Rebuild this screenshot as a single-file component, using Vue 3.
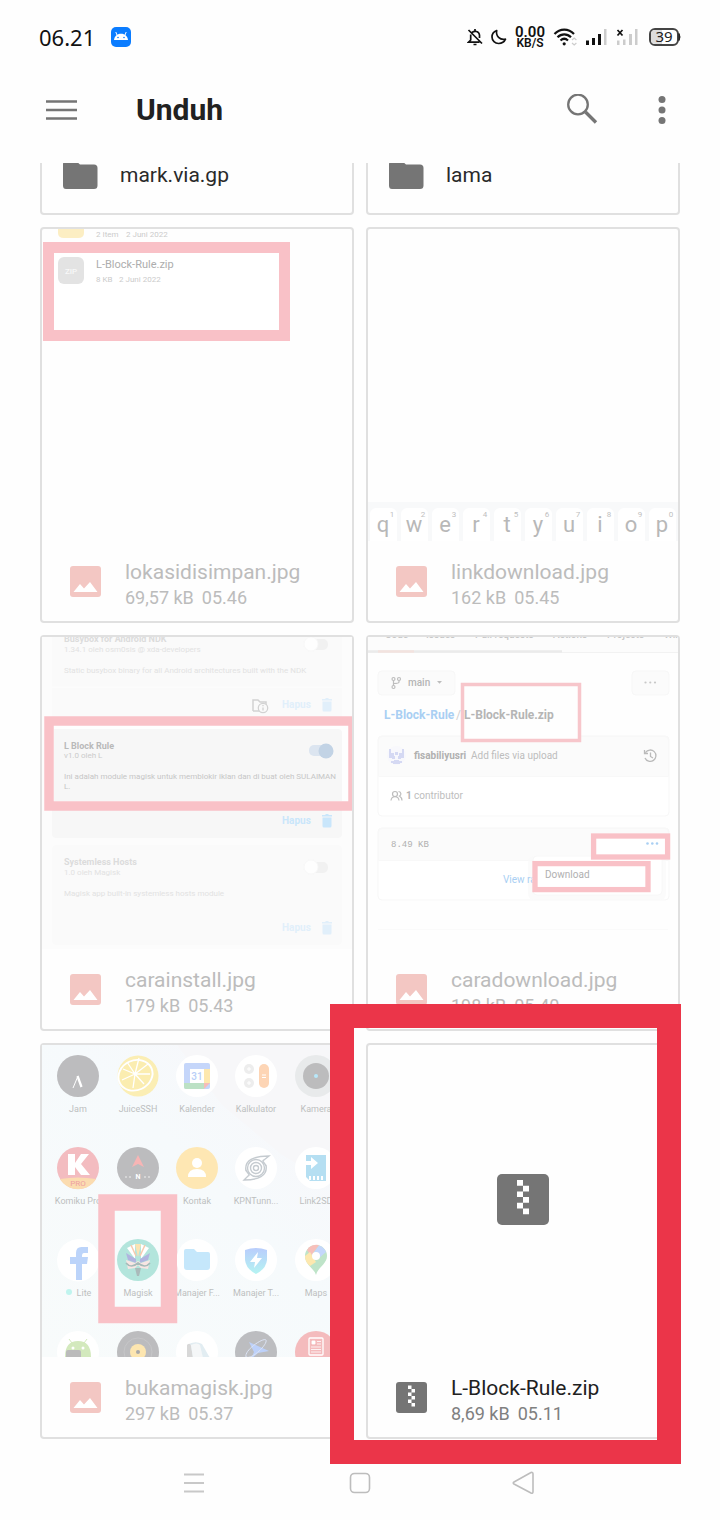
<script setup>
const folders = ['mark.via.gp', 'lama']

const files = [
  { id: 'saved', name: 'lokasidisimpan.jpg', size: '69,57 kB', time: '05.46' },
  { id: 'keyboard', name: 'linkdownload.jpg', size: '162 kB', time: '05.45' },
  { id: 'modules', name: 'carainstall.jpg', size: '179 kB', time: '05.43' },
  { id: 'repo', name: 'caradownload.jpg', size: '198 kB', time: '05.40' },
  { id: 'launcher', name: 'bukamagisk.jpg', size: '297 kB', time: '05.37' },
  { id: 'zip', name: 'L-Block-Rule.zip', size: '8,69 kB', time: '05.11', active: true },
]

const keys = [...'qwertyuiop'].map((letter, i) => ({
  letter,
  digit: (i + 1) % 10,
  x: 2 + i * 31,
}))

const columns = [36, 96, 155, 214, 274]
const labels = [
  ['Jam', 'JuiceSSH', 'Kalender', 'Kalkulator', 'Kamera'],
  ['Komiku Pro', '', 'Kontak', 'KPNTunn...', 'Link2SD'],
  ['', '', 'Manajer F...', 'Manajer T...', 'Maps'],
]
const modules = [
  { y: 75, opacity: 0.5 },
  { y: 191, opacity: 1 },
  { y: 298, opacity: 0.5 },
]
const tabs = [
  [17, 'Code'], [58, 'Issues'], [107, 'Pull requests'],
  [185, 'Actions'], [239, 'Projects'], [296, 'Wiki'],
]
</script>

<template>
  <div class="screen">
    <div class="status">
      <span class="clock">06.21</span>
      <svg class="notif" width="22" height="22" viewBox="0 0 22 22">
        <rect x="1" y="1" width="20" height="20" rx="5" fill="#0a7cff" />
        <path d="M4 14C4.300 10.500 7 7.800 11 7.800S17.700 10.500 18 14Z" fill="#fff" />
        <path d="M7 9 5.800 6M15 9 16.200 6" stroke="#fff" stroke-width="1" />
        <circle cx="8" cy="11.500" r=".8" fill="#0a7cff" /><circle cx="14" cy="11.500" r=".8" fill="#0a7cff" />
      </svg>
      <span class="spacer"></span>
      <svg width="16" height="18" viewBox="0 0 16 18" fill="none" stroke="#111" stroke-width="1.700">
        <path d="M5 4.500C7.500 2.500 12 3 12.500 7V10M3.700 6.500V12L1.500 14.200H12.500M1.500 2 15 15.500" />
        <path d="M8 1V3M6.500 16.500H9.500" />
      </svg>
      <svg width="16" height="16" viewBox="0 0 16 16" fill="none" stroke="#111" stroke-width="1.700">
        <path d="M5.700 1.500C3 2.500 1 5 1 8A6.500 6.500 0 0 0 7.700 14.500C11 14.500 13.500 12.500 14.500 10.200 9 11.500 4.500 7 5.700 1.500Z" stroke-linejoin="round" />
      </svg>
      <span class="speed"><b>0.00</b><small>KB/S</small></span>
      <svg width="24" height="20" viewBox="0 0 24 20" fill="none" stroke="#111" stroke-width="2.200">
        <path d="M1.500 7C7 1.200 15.500 1.200 21 7M4.500 10.300C8.500 6.300 14 6.300 18 10.300M7.500 13.500C10 11.200 12.500 11.200 15 13.500" />
        <circle cx="11.200" cy="16.800" r="1.600" fill="#111" stroke="none" />
        <path d="M19 13 21.200 11 23.400 13M19 16 21.200 18 23.400 16" stroke="#ccc" stroke-width="1.200" />
      </svg>
      <svg width="23" height="18" viewBox="0 0 23 18">
        <path d="M1 12.500h3V17H1ZM7 10h3v7H7ZM13 6h3v11h-3Z" fill="#111" />
        <path d="M19 1h2.500v16H19Z" fill="#ccc" />
      </svg>
      <svg width="25" height="18" viewBox="0 0 25 18">
        <path d="M1 12.500h2.500V17H1ZM7 11.500h2.500V17H7ZM13 6h3v11h-3ZM19 1h2.500v16H19Z" fill="#ccc" />
        <path d="M1.500 2 6.500 7.500M6.500 2 1.500 7.500" stroke="#111" stroke-width="1.700" />
      </svg>
      <svg width="32" height="20" viewBox="0 0 32 20">
        <rect x="1" y="2" width="28" height="16" rx="5" fill="#fff" stroke="#444" stroke-width="2" />
        <path d="M6 3H13V17H6A4 4 0 0 1 2 13V7A4 4 0 0 1 6 3Z" fill="#ddd" />
        <path d="M30 6.500Q32 10 30 13.500Z" fill="#222" stroke="#222" />
        <text x="15" y="15.300" text-anchor="middle" class="noto" font-size="15" fill="#222">39</text>
      </svg>
    </div>

    <header class="appbar">
      <button type="button" aria-label="Menu">
        <svg width="32" height="24" viewBox="0 0 32 24" stroke="#757575" stroke-width="2.500"><path d="M0 3.500H31M0 12H31M0 20.500H31" /></svg>
      </button>
      <h1>Unduh</h1>
      <span class="spacer"></span>
      <button type="button" aria-label="Search">
        <svg width="32" height="32" viewBox="0 0 32 32" fill="none" stroke="#757575">
          <circle cx="12" cy="10.500" r="9.800" stroke-width="2.300" />
          <path d="M19.500 18 30 28.500" stroke-width="3.300" />
        </svg>
      </button>
      <button type="button" class="more" aria-label="More options">
        <svg width="8" height="30" viewBox="0 0 8 30" fill="#757575"><circle cx="4" cy="4.500" r="3.500" /><circle cx="4" cy="15" r="3.500" /><circle cx="4" cy="25.500" r="3.500" /></svg>
      </button>
    </header>

    <main>
      <ul class="grid">
        <li v-for="folder in folders" :key="folder">
          <a class="card folder" href="#">
            <svg width="36" height="28" viewBox="0 0 36 28"><path d="M4 0H14L18 3.500H32Q35.500 3.500 35.500 7V24.500Q35.500 28 32 28H4Q1 28 1 24.500V3.500Q1 0 4 0Z" fill="#757575" /></svg>
            <span>{{ folder }}</span>
          </a>
        </li>

        <li v-for="file in files" :key="file.id">
          <a class="card" :class="{ active: file.active }" href="#">
            <svg v-if="file.id === 'saved'" class="thumb" viewBox="0 0 310 312">
              <path d="M16 0H42V4Q42 9 36 9H22Q16 9 16 4Z" fill="#fceec3" />
              <text x="54" y="8" font-size="8" fill="#cbcbcb">2 Item</text>
              <text x="84" y="8" font-size="8" fill="#cbcbcb">2 Juni 2022</text>
              <rect x="6.500" y="18.500" width="236" height="88" fill="#fff" stroke="#f9c1c7" stroke-width="11" />
              <rect x="16" y="28" width="26" height="27" rx="6" fill="#e3e3e3" />
              <text x="29" y="45" font-size="8" text-anchor="middle" font-weight="500" fill="#f8f8f8">ZIP</text>
              <text x="54" y="39" font-size="11" fill="#adadad">L-Block-Rule.zip</text>
              <text x="54" y="53" font-size="8" fill="#cbcbcb">8 KB</text>
              <text x="77" y="53" font-size="8" fill="#cbcbcb">2 Juni 2022</text>
            </svg>

            <svg v-else-if="file.id === 'keyboard'" class="thumb" viewBox="0 0 310 312">
              <rect y="273" width="310" height="39" fill="#f8f9fa" />
              <g v-for="key in keys" :key="key.letter">
                <rect :x="key.x" y="279" width="27" height="40" rx="6" fill="#fff" />
                <text :x="key.x + 13" y="303" font-size="22" text-anchor="middle" fill="#b8b8b8">{{ key.letter }}</text>
                <text :x="key.x + 22" y="288" font-size="8" text-anchor="middle" fill="#c0c0c0">{{ key.digit }}</text>
              </g>
            </svg>

            <svg v-else-if="file.id === 'modules'" class="thumb" viewBox="0 0 310 312">
              <rect width="310" height="312" fill="#fcfcfc" />
              <rect x="10" y="-8" width="290" height="90" fill="#fafafa" />
              <path d="M10 50H300" stroke="#fdfdfd" />
              <rect x="10" y="165" width="290" height="36" rx="4" fill="#f7f7f7" />
              <rect x="10" y="208" width="290" height="100" rx="4" fill="#fafafa" />
              <rect x="7" y="84" width="304" height="85" fill="#fefefe" stroke="#f9c1c7" stroke-width="9.500" />
              <path d="M12 92H296Q300 92 300 96V164H12Z" fill="#f7f7f7" />
              <g font-size="9" font-weight="700">
                <text x="22" y="5" fill="#dcdcdc">Busybox for Android NDK</text>
                <text x="22" y="112" fill="#b9b9b9">L Block Rule</text>
                <text x="22" y="228" fill="#dcdcdc">Systemless Hosts</text>
              </g>
              <g font-size="8" fill="#e2e2e2">
                <text x="22" y="15">1.34.1 oleh osm0sis @ xda-developers</text>
                <text x="22" y="121" fill="#cbcbcb">v1.0 oleh L</text>
                <text x="22" y="238">1.0 oleh Magisk</text>
                <text x="22" y="36">Static busybox binary for all Android architectures built with the NDK</text>
                <text x="22" y="142" fill="#c6c6c6">Ini adalah module magisk untuk memblokir iklan dan di buat oleh SULAIMAN</text>
                <text x="22" y="152" fill="#c6c6c6">L.</text>
                <text x="22" y="259">Magisk app built-in systemless hosts module</text>
              </g>
              <g v-for="y in [7, 230]" :key="y">
                <rect x="266" :y="y - 5" width="20" height="11" rx="5" fill="#f1f1f1" />
                <circle cx="269" :cy="y" r="7" fill="#fefefe" stroke="#f8f8f8" />
              </g>
              <rect x="267" y="108" width="21" height="11" rx="5" fill="#dce5f0" />
              <circle cx="284" cy="114" r="7.500" fill="#c2d3e5" />
              <path d="M211 74V63H216L218 65H224V68M211 74H218" fill="none" stroke="#d2d2d2" stroke-width="1.500" />
              <circle cx="221" cy="71" r="4.700" fill="#fafafa" stroke="#d2d2d2" stroke-width="1.300" />
              <path d="M221 70.500V73.500M221 68V69.200" stroke="#d2d2d2" stroke-width="1.300" />
              <g v-for="m in modules" :key="m.y" :opacity="m.opacity" fill="#c9e6fb">
                <text x="240" :y="m.y - 4" font-size="10" font-weight="700">Hapus</text>
                <path :transform="`translate(280 ${m.y - 14})`" d="M0 1H3L4 0H6L7 1H10V2.500H0ZM.5 3.500H9.500V12Q9.500 13.500 8 13.500H2Q.5 13.500 .5 12Z" />
              </g>
            </svg>

            <svg v-else-if="file.id === 'repo'" class="thumb" viewBox="0 0 310 312">
              <rect width="310" height="15" fill="#fcfcfc" />
              <text v-for="[x, tab] in tabs" :key="tab" :x="x" y="1" font-size="10" font-weight="500" fill="#c8c8c8">{{ tab }}</text>
              <path d="M0 15.500H310" stroke="#f2f2f2" />
              <path d="M0 14.500H194" stroke="#ebebeb" stroke-width="2.500" />
              <path d="M10 14.500H46" stroke="#f3e3df" stroke-width="2.500" />
              <g fill="#fbfbfb" stroke="#f7f7f7">
                <rect x="10" y="34" width="77" height="24" rx="4" />
                <rect x="264" y="34" width="37" height="24" rx="4" />
              </g>
              <g fill="none" stroke="#bdbdbd" stroke-width="1.200">
                <circle cx="25.500" cy="42" r="1.500" /><circle cx="31" cy="42" r="1.500" /><circle cx="25.500" cy="50" r="1.500" />
                <path d="M25.500 43.500V48.500M31 43.500V45Q31 46.500 25.500 46.500" />
              </g>
              <text x="40" y="49" font-size="10" font-weight="500" fill="#b5b5b5">main</text>
              <path d="M69 44H74L71.500 46.700Z" fill="#bdbdbd" />
              <g fill="#c8c8c8"><circle cx="277.500" cy="45.500" r="1.100" /><circle cx="282.300" cy="45.500" r="1.100" /><circle cx="287" cy="45.500" r="1.100" /></g>
              <g fill="#fff" stroke="#f7f7f7">
                <rect x="10" y="99" width="291" height="80" rx="4" />
                <rect x="10" y="191" width="291" height="72" rx="4" />
              </g>
              <path d="M10.500 139.500V103Q10.500 99.500 14 99.500H297Q300.500 99.500 300.500 103V139.500ZM10.500 223.500V195Q10.500 191.500 14 191.500H297Q300.500 191.500 300.500 195V223.500Z" fill="#fbfbfb" stroke="#f8f8f8" />
              <rect x="94.500" y="47.500" width="117" height="56" fill="#fefefe" stroke="#f7c6cb" stroke-width="3.500" />
              <g font-size="12" font-weight="700">
                <text x="16" y="82" fill="#a9cff3">L-Block-Rule</text>
                <text x="96" y="82" fill="#b5b5b5">L-Block-Rule.zip</text>
              </g>
              <text x="88" y="82" font-size="12" fill="#d0d0d0">/</text>
              <circle cx="28.500" cy="118.500" r="9.500" fill="#f8f8fc" />
              <path d="M21 112h2v4h3v3h-2v2h-3ZM36 112h-2v4h-3v3h2v2h3ZM27 115h3v3h-3ZM24 119h3v3h-3ZM30 119h3v3h-3ZM23 124h3v-1h5v1h3v2h-2v1h-7v-1h-2Z" fill="#d5d9f3" />
              <text x="46" y="122" font-size="10" font-weight="700" fill="#b0b0b0">fisabiliyusri</text>
              <text x="103" y="122" font-size="10" fill="#bdbdbd">Add files via upload</text>
              <path d="M277.500 115.500A5.700 5.700 0 1 1 277 121M276.500 113V116.500H280M282.500 115.500V119.500L285 121" fill="none" stroke="#bababa" stroke-width="1.300" />
              <g fill="none" stroke="#bdbdbd" stroke-width="1.200">
                <circle cx="27" cy="157" r="2.500" /><path d="M23 163.500C23.500 158.500 30.500 158.500 31 163.500M30.500 154.500C33.500 155 33.500 158 31.500 159 33 160 34 161.500 34 163.500" />
              </g>
              <text x="38" y="162" font-size="10" font-weight="700" fill="#b5b5b5">1</text>
              <text x="46" y="162" font-size="10" fill="#bdbdbd">contributor</text>
              <text x="23" y="210" font-size="9" class="mono" fill="#b0b0b0">8.49 KB</text>
              <rect x="160" y="219" width="138" height="44" rx="6" fill="#fafafa" opacity=".7" />
              <text x="135" y="246" font-size="10" fill="#a9cff3">View raw</text>
              <rect x="165" y="219" width="129" height="39" rx="4" fill="#fff" stroke="#f8f8f8" />
              <g fill="#fff" stroke="#f9c1c7" stroke-width="5.300">
                <rect x="225.600" y="199" width="74" height="21" />
                <rect x="167" y="226.600" width="113" height="26" />
              </g>
              <g fill="#a9cff3"><circle cx="279.500" cy="206.500" r="1.300" /><circle cx="284.300" cy="206.500" r="1.300" /><circle cx="289" cy="206.500" r="1.300" /></g>
              <text x="177" y="241" font-size="10" fill="#b0b0b0">Download</text>
              <path d="M10 292.500H300" stroke="#fafafa" />
            </svg>

            <svg v-else-if="file.id === 'launcher'" class="thumb" viewBox="0 0 310 312">
              <defs>
                <linearGradient id="wall" x1="0" y1="1" x2="1" y2="0">
                  <stop offset="0" stop-color="#f8fbfb" /><stop offset=".55" stop-color="#f6fafc" /><stop offset="1" stop-color="#f8f6fa" />
                </linearGradient>
                <linearGradient id="shield" x1="0" y1="0" x2="0" y2="1">
                  <stop offset="0" stop-color="#b9cdfc" /><stop offset="1" stop-color="#b5f4f2" />
                </linearGradient>
              </defs>
              <rect width="310" height="312" fill="url(#wall)" />
              <path d="M135 0H310V150L240 110 180 60Z" fill="#f7f7f9" />
              <g font-size="9" text-anchor="middle" fill="#bdbfc0">
                <template v-for="(row, r) in labels" :key="r">
                  <text v-for="(label, c) in row" :key="c" :x="columns[c]" :y="67 + r * 92">{{ label }}</text>
                </template>
                <text x="42" y="251">Lite</text>
              </g>
              <circle cx="27" cy="247" r="3" fill="#c0f4ee" />
              <rect x="64.500" y="157.500" width="62.500" height="112.500" fill="#f8fcfd" stroke="#f9c1c7" stroke-width="16.500" />
              <text x="96" y="251" font-size="9" text-anchor="middle" fill="#bdbfc0">Magisk</text>

              <g transform="translate(36 31)">
                <circle r="21" fill="#bcbcbe" />
                <path d="M-5 12 0 0" stroke="#fff" stroke-width="1" /><path d="M-.5 0 3.500 11" stroke="#fff" stroke-width="2.300" />
              </g>
              <g transform="translate(96 31)">
                <circle r="20.500" fill="#fbeeb4" />
                <circle cx="-2" cy="-2" r="17.500" fill="#fbedb0" stroke="#fff" stroke-width="2" transform="rotate(-25) scale(1 .85)" />
                <path d="M-3-2-15-7M-3-2-11-14M-3-2 1-18M-3-2 10-12M-3-2 12-2M-3-2 6 8M-3-2-5 12M-3-2-16 4" stroke="#fff" stroke-width="1.300" />
              </g>
              <g transform="translate(155 31)">
                <circle r="21" fill="#fff" />
                <rect x="-13" y="-13" width="26" height="26" rx="2" fill="#c5d6fa" />
                <path d="M7-7H13V7H7Z" fill="#fde8ae" /><path d="M-13 7H7V13H-11Q-13 13-13 11Z" fill="#bce1c5" /><path d="M7 7H13L7 13Z" fill="#f6bcb8" />
                <rect x="-7" y="-7" width="14" height="14" fill="#fff" />
                <text y="4" text-anchor="middle" font-size="10" font-weight="500" fill="#b9cff8">31</text>
              </g>
              <g transform="translate(214 31)">
                <circle r="21" fill="#fff" />
                <circle cx="-7" cy="-7" r="5" fill="#ededed" /><circle cx="-7" cy="7" r="5" fill="#ededed" />
                <path d="M-9-7H-5M-7-9V-5M-9 7H-5M-7 5V9" stroke="#fff" />
                <rect x="3" y="-12" width="10" height="24" rx="5" fill="#fdd5b5" /><path d="M6-1H10M6 1.500H10" stroke="#fff" />
              </g>
              <g transform="translate(274 31)"><circle r="21" fill="#e8eaeb" /><circle r="13" fill="#bcbcbd" /><circle r="2" fill="#b7e8fa" /></g>

              <g transform="translate(36 123)">
                <circle r="21" fill="#f3bcc0" />
                <path d="M-18 11Q0 8 18 11A21 21 0 0 1-18 11Z" fill="#fbdcb0" />
                <path d="M-10-14H-3V-5L3-14H11L3-4 12 7H3L-3-1V7H-10Z" fill="#fff" />
                <text y="18" text-anchor="middle" font-size="8" fill="#ee9fa2">PRO</text>
              </g>
              <g transform="translate(96 123)">
                <circle r="21" fill="#bcbcbe" />
                <path d="M0-13 6-1 0-4-6-1Z" fill="#f7b5b5" />
                <text y="11" text-anchor="middle" font-size="7" font-weight="700" fill="#fff">N</text>
                <path d="M-13 9H-6M6 9H13" stroke="#eee" stroke-width="1" stroke-dasharray="2 2" />
              </g>
              <g transform="translate(155 123)"><circle r="21" fill="#fee7b3" /><circle cy="-5" r="5" fill="#fff" /><path d="M-9 9Q-9 1 0 1T9 9Z" fill="#fff" /></g>
              <g transform="translate(214 123)">
                <circle r="21" fill="#fff" />
                <g fill="none" stroke="#c5cbd0" stroke-width="1.400">
                  <circle r="8.500" /><circle r="5.500" /><circle r="2.500" />
                  <path d="M-10 3C-12-8-2-12 13-12L8-8C5-7 9-5 10-2M10-3C12 8 2 12-12 12L-8 8C-5 7-9 5-10 2" />
                </g>
              </g>
              <g transform="translate(274 123)">
                <circle r="21" fill="#fff" />
                <path d="M-10-13H10V13H-6L-10 9Z" fill="#b5dff2" /><path d="M-12-7H-5V-11L2-5-5 1V-3H-12Z" fill="#fff" />
                <path d="M-6 8V12M-2 8V12M2 8V12M6 8V12" stroke="#fff" stroke-width="2" />
              </g>

              <path d="M26 197A21 21 0 1 0 56 222V207A21 21 0 0 0 26 197Z" fill="#fff" />
              <path d="M34 235V219H28V212H34V208Q34 201 41 202H46V208H42Q40 208 40 211V212H46L45 219H40V235Z" fill="#bcd4fa" />
              <g transform="translate(96 215)">
                <circle r="21" fill="#b3e5dc" />
                <path d="M-11-12-3-1-3-16ZM11-12 3-1 3-16Z" fill="#fff" /><path d="M-3-16H3L0-3Z" fill="#fbe3b2" />
                <path d="M-7-15-2-4M7-15 2-4" stroke="#f7cbae" stroke-width="1.500" />
                <path d="M-12-7-2-1V3L-10 0ZM12-7 2-1V3L10 0Z" fill="#b0b4df" />
                <path d="M-12 0-3 3 0 1 3 3 12 0 10 9 3 8 0 5-3 8-10 9Z" fill="#f8e5e3" />
                <path d="M-12 3Q-7 9 0 3 7 9 12 3" fill="none" stroke="#a7bbb9" stroke-width="1.700" />
                <path d="M-3 8H3L1 16H-1Z" fill="#aababa" />
              </g>
              <path d="M140 200A21 21 0 1 1 140 230Q136 225 135 220V210Q136 205 140 200Z" fill="#fff" />
              <path d="M144 204H152L155 207H166Q168 207 168 209V222Q168 225 165 225H145Q142 225 142 222V206Q142 204 144 204Z" fill="#c5e7fb" />
              <g transform="translate(214 215)"><circle r="21" fill="#fff" /><path d="M-11-10Q0-14 11-10V0Q10 9 0 14-10 9-11 0Z" fill="url(#shield)" /><path d="M2-8-6 2H-1L-2 8 6-2H1Z" fill="#fff" /></g>
              <g transform="translate(274 215)">
                <circle r="21" fill="#fff" />
                <path d="M0-15A11 11 0 0 1 11-4C11 4 2 7 0 15-2 8-11 5-11-4A11 11 0 0 1 0-15Z" fill="#bfe4c9" />
                <path d="M-9-10A11 11 0 0 1 3-15L-5-4Z" fill="#f7bfba" /><path d="M3-14.600A11 11 0 0 1 10-8L2-1-2-8Z" fill="#c4d7fb" /><path d="M-11-4-6-8 0 2-6 6Q-11 2-11-4Z" fill="#fde8af" />
                <circle cy="-4" r="4" fill="#fff" />
              </g>

              <g transform="translate(36 307)">
                <circle r="21" fill="#fff" />
                <path d="M-13 5Q-13-11 0-11T13 5Z" fill="#d3e9bd" /><path d="M-6-9-9-13M6-9 9-13" stroke="#d3e9bd" /><circle cx="-5" cy="-4" r="1.500" fill="#fff" /><circle cx="5" cy="-4" r="1.500" fill="#fff" />
                <rect x="-12" y="-2" width="15" height="12" rx="2" fill="#bbb" />
              </g>
              <g transform="translate(96 307)"><circle r="21" fill="#bcbcbe" /><circle r="14" fill="none" stroke="#c6c6c8" /><circle r="8" fill="#fde6b0" /><circle r="2" fill="#aaa" /></g>
              <g transform="translate(155 307)"><circle r="21" fill="#fff" /><path d="M-10-7Q-2-12 5-8L13 6H-10Z" fill="#e2edf2" /><path d="M-10-7Q-7-10-6-6L-4 6H-10Z" fill="#d8d8d8" /><path d="M-6-7Q0-10 3-7L6 6H-4Z" fill="#f5f7f8" /></g>
              <g transform="translate(214 307)"><circle r="21" fill="#bcbdc0" /><path d="M-7-10 13-1 2 1-5 7-2 0Z" fill="#bdd1fa" /><path d="M-10 5C-12-2 8-15 10-12 12-8-4 8-10 5Z" fill="none" stroke="#dce4f5" /></g>
              <g transform="translate(274 307)"><circle r="21" fill="#f4bbbd" /><rect x="-7" y="-14" width="14" height="17" rx="1" fill="none" stroke="#fff" stroke-width="1.300" /><path d="M-4-11H-1V-8H-4ZM1-10.500H5M1-8H5M-5-5H5M-5-2.500H5M-5 0H5" fill="#fff" stroke="#fff" stroke-width=".8" /></g>
            </svg>

            <svg v-else class="thumb" viewBox="0 0 310 312">
              <rect x="129" y="129" width="52" height="51" rx="5" fill="#757575" />
              <path d="M149 135h6v5.700h6v5.700h-6v-5.700h-6ZM149 146.400h6v5.700h6v5.700h-6v-5.700h-6ZM149 157.800h6v5.700h6v5.700h-6v-5.700h-6Z" fill="#fff" />
            </svg>

            <span class="info">
              <svg width="31" height="31" viewBox="0 0 31 31">
                <template v-if="file.active">
                  <rect width="31" height="31" rx="3" fill="#757575" />
                  <path d="M12 3.500h3.500V7H19v3.500h-3.500V7H12ZM12 10.500h3.500V14H19v3.500h-3.500V14H12ZM12 17.500h3.500V21H19v3.500h-3.500V21H12Z" fill="#fff" />
                </template>
                <template v-else>
                  <rect width="31" height="31" rx="3" fill="#f3c7c3" />
                  <path d="M3.500 26 10 18 14 22.500 20 16 27.500 26Z" fill="#fff" />
                </template>
              </svg>
              <span class="text">
                <span class="name">{{ file.name }}</span>
                <span class="meta"><span>{{ file.size }}</span><span>{{ file.time }}</span></span>
              </span>
            </span>
          </a>
          <span v-if="file.active" class="highlight"></span>
        </li>
      </ul>
    </main>

    <nav>
      <button type="button" aria-label="Recent apps">
        <svg width="24" height="24" viewBox="0 0 24 24" stroke="#c8c8c8" stroke-width="2"><path d="M2 3.500H22M2 12H22M2 20.500H22" /></svg>
      </button>
      <button type="button" aria-label="Home">
        <svg width="24" height="24" viewBox="0 0 24 24" fill="none" stroke="#bdbdbd" stroke-width="1.600"><rect x="2.500" y="2.500" width="19" height="19" rx="4" /></svg>
      </button>
      <button type="button" aria-label="Back">
        <svg width="30" height="24" viewBox="0 0 30 24" fill="none" stroke="#bdbdbd" stroke-width="1.600"><path d="M20 1.500Q22 1 22 3V20.500Q22 23 20 22L3 13Q1.500 12 3 11Z" stroke-linejoin="round" /></svg>
      </button>
    </nav>
  </div>
</template>

<style>
body {
  background: #fefefe;
}
</style>

<style scoped>
.screen {
  min-height: 100vh;
  display: flex;
  flex-direction: column;
  font-family: Roboto, "Liberation Sans", sans-serif;
  color: #212121;
}
svg {
  display: block;
  flex: none;
}
button {
  border: 0;
  padding: 0;
  background: none;
  display: flex;
}
.spacer {
  flex: 1;
}
.status {
  display: flex;
  align-items: center;
  gap: 8px;
  height: 74px;
  padding: 0 39px;
}
.clock {
  font: 22px/30px "Noto Sans", sans-serif;
  color: #111;
}
.notif {
  margin-left: 7px;
}
.speed {
  display: flex;
  flex-direction: column;
  align-items: center;
  color: #111;
}
.speed b {
  font-size: 15px;
  line-height: 12px;
  font-weight: 600;
}
.speed small {
  font-size: 12px;
  line-height: 11px;
  font-weight: 600;
}
.noto {
  font-family: "Noto Sans", sans-serif;
}
.mono {
  font-family: "Liberation Mono", monospace;
}
.appbar {
  display: flex;
  align-items: center;
  height: 72px;
  padding: 0 54px 17px 46px;
}
.appbar h1 {
  margin: 0 0 0 58px;
  font-size: 30px;
  line-height: 40px;
  font-weight: 700;
}
.more {
  margin-left: 60px;
}
main {
  overflow: hidden;
  padding: 0 40px 25px;
}
.grid {
  list-style: none;
  margin: -28px 0 0;
  padding: 0;
  display: grid;
  grid-template-columns: 1fr 1fr;
  gap: 12px;
}
li {
  position: relative;
  min-width: 0;
}
.card {
  display: block;
  border: 2px solid #e0e0e0;
  border-radius: 4px;
  color: #bcbcbc;
  text-decoration: none;
}
.folder {
  display: flex;
  align-items: center;
  gap: 22px;
  height: 76px;
  padding-left: 20px;
  font-size: 21px;
  color: #2a2a2a;
}
.thumb {
  width: 100%;
  height: auto;
}
.info {
  display: flex;
  align-items: center;
  gap: 24px;
  height: 80px;
  padding-left: 28px;
}
.text {
  padding-top: 6px;
}
.name {
  display: block;
  font-size: 21px;
  line-height: 28px;
}
.meta {
  display: flex;
  gap: 8px;
  font-size: 18px;
  line-height: 24px;
}
.active {
  color: #212121;
}
.active .meta {
  color: #808080;
}
.highlight {
  position: absolute;
  inset: -39px -1px -25px -36px;
  border: 24px solid #eb3549;
  pointer-events: none;
}
nav {
  display: grid;
  grid-template-columns: repeat(3, 1fr);
  width: 69%;
  margin: 0 auto;
  padding: 7px 0 25px;
}
nav button {
  justify-content: center;
}
</style>
